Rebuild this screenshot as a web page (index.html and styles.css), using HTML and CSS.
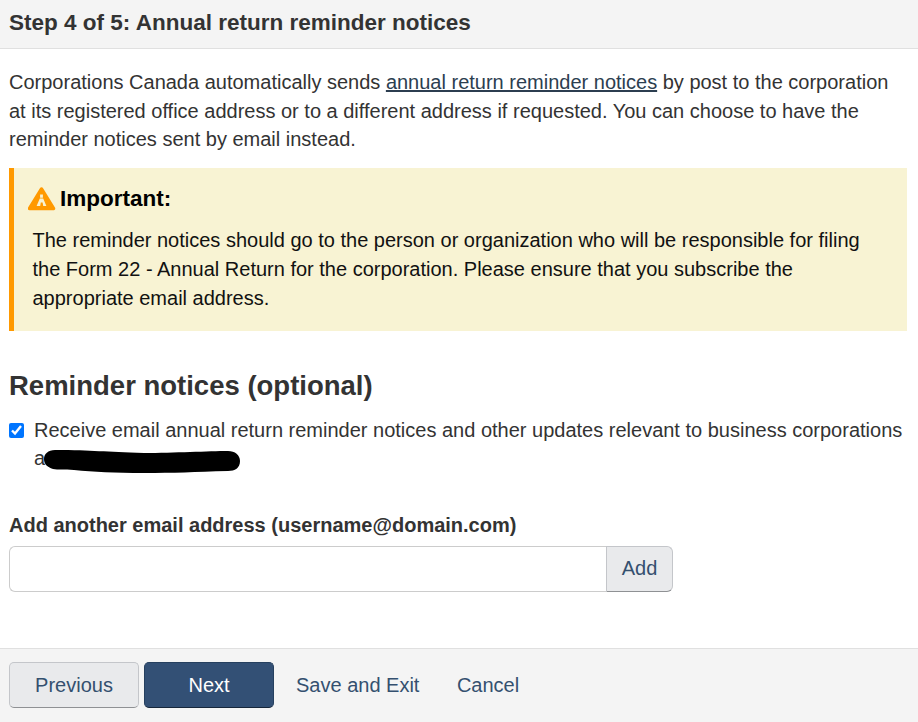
FILE: index.html
```html
<!DOCTYPE html>
<html lang="en">
<head>
<meta charset="utf-8">
<title>Step 4 of 5</title>
<link rel="stylesheet" href="styles.css">
</head>
<body>
<header class="step-head"><h1>Step 4 of 5: Annual return reminder notices</h1></header>
<main class="content">
  <p class="intro">Corporations Canada automatically sends <a href="#">annual return reminder notices</a> by post to the corporation at its registered office address or to a different address if requested. You can choose to have the reminder notices sent by email instead.</p>
  <section class="notice">
    <h2><svg class="warn" viewBox="0 0 28 24" width="28" height="24"><path d="M13.500 2 L25.500 21.500 H1.500 Z" fill="#ff9900" stroke="#ff9900" stroke-width="3.4" stroke-linejoin="round"/><path d="M12.100 7.500h2.800v3.200h-2.800zM11.800 11.500h3.400l3.200 7.500h-3.200l-.6-3.500h-1.800l-.6 3.500H8.600z" fill="#f8f2d2"/></svg>Important:</h2>
    <p>The reminder notices should go to the person or organization who will be responsible for filing the Form 22 - Annual Return for the corporation. Please ensure that you subscribe the appropriate email address.</p>
  </section>
  <h2 class="section-title">Reminder notices (optional)</h2>
  <label class="check">
    <input type="checkbox" checked>
    <span>Receive email annual return reminder notices and other updates relevant to business corporations a<svg class="redact" viewBox="0 0 196 24" width="196" height="24"><path d="M11 1 C50 1 60 3 100 4 C130 4 165 2 184 2 C191 2 196 6 196 12 C196 19 191 22 184 22 C150 23 130 24 100 24 C70 24 50 23 30 21 C20 20 14 21 9 20 C3 18 0 15 0 10 C0 5 4 1 11 1 Z" fill="#000"/></svg></span>
  </label>
  <label class="field-label" for="email">Add another email address (username@domain.com)</label>
  <div class="input-group">
    <input id="email" type="text">
    <button class="add" type="button">Add</button>
  </div>
</main>
<footer class="actions">
  <button class="btn" type="button">Previous</button>
  <button class="btn primary" type="button">Next</button>
  <a class="link" href="#">Save and Exit</a>
  <a class="link" href="#">Cancel</a>
</footer>
</body>
</html>
```
FILE: styles.css
```css
* { box-sizing: border-box; }
html, body { height: 100%; }
body {
  margin: 0;
  height: 722px;
  overflow: hidden;
  display: flex;
  flex-direction: column;
  font-family: "Liberation Sans", Arial, sans-serif;
  font-size: 20px;
  line-height: 28.5px;
  color: #333;
  background: #fff;
}
.step-head {
  height: 49px;
  padding: 8px 9px 0;
  background: #f4f4f4;
  border-bottom: 1px solid #e0e0e0;
}
.step-head h1 {
  margin: 0;
  font-size: 22.5px;
  line-height: 30px;
  font-weight: 700;
  color: #333;
}
.content {
  flex: 1;
  padding: 19px 11px 0 9px;
}
.intro { margin: 0 0 14px; }
.intro a { color: #2c3e50; text-decoration: underline; }
.notice {
  height: 163px;
  padding: 16px 24px 0 14px;
  background: #f8f3d3;
  border-left: 5px solid #ff9900;
  color: #111;
}
.notice h2 {
  margin: 0 0 12px;
  display: flex;
  align-items: center;
  gap: 4px;
  font-size: 22.5px;
  line-height: 30px;
  font-weight: 700;
  color: #000;
}
.notice p { margin: 0 0 0 4.5px; line-height: 29px; }
.warn { display: block; }
.section-title {
  margin: 38px 0 13px;
  font-size: 27.5px;
  line-height: 34px;
  font-weight: 700;
  color: #333;
}
.check { display: flex; gap: 10px; }
.check input {
  margin: 7px 0 0 0;
  width: 15px;
  height: 15px;
  flex: none;
  accent-color: #0075ff;
}
.redact {
  display: inline-block;
  margin-left: -1px;
  vertical-align: -8px;
}
.field-label {
  display: block;
  margin-top: 38px;
  font-weight: 700;
}
.input-group { display: flex; width: 664px; height: 46px; margin-top: 6px; }
.input-group input {
  flex: 1;
  min-width: 0;
  border: 1px solid #ccc;
  border-right: 0;
  border-radius: 6px 0 0 6px;
  background: #fff;
}
.add {
  width: 67px;
  border: 1px solid #c4c6ca;
  border-bottom-color: #8f9194;
  border-radius: 0 6px 6px 0;
  background: #e9eaec;
  color: #34506f;
  font: inherit;
}
.actions {
  height: 74px;
  flex: none;
  display: flex;
  align-items: flex-start;
  padding: 13px 9px 0;
  background: #f4f4f4;
  border-top: 1px solid #e0e0e0;
}
.btn {
  height: 46px;
  border: 1px solid #c4c6ca;
  border-bottom-color: #8f9194;
  border-radius: 5px;
  background: #e9eaec;
  color: #34506f;
  font: inherit;
}
.btn:first-child { width: 130px; }
.primary {
  width: 130px;
  margin-left: 5px;
  background: #335075;
  border-color: #26405f;
  border-bottom-color: #16263a;
  color: #fff;
}
.link { color: #34506f; text-decoration: none; margin: 9px 0 0 22px; }
.link + .link { margin-left: 37.5px; }
```
